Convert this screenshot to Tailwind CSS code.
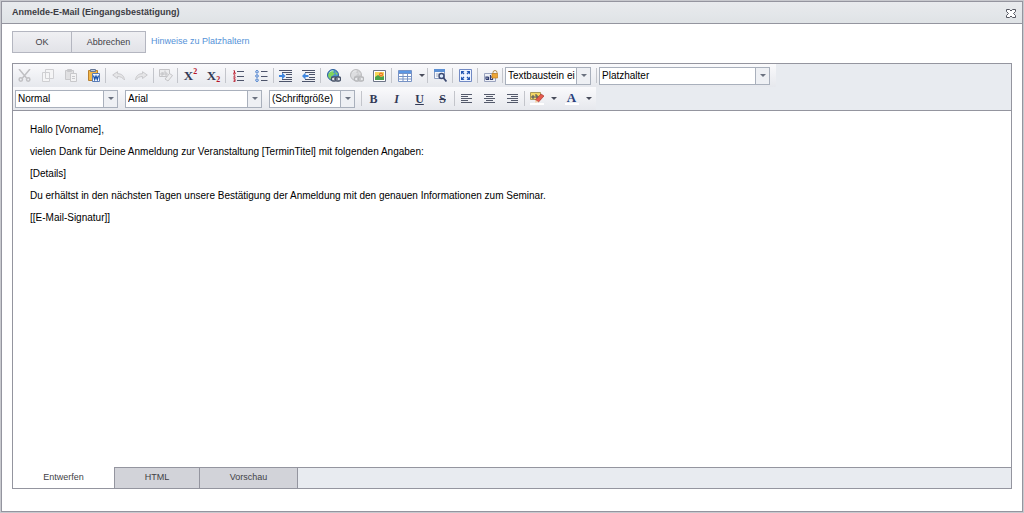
<!DOCTYPE html>
<html lang="de">
<head>
<meta charset="utf-8">
<title>Anmelde-E-Mail (Eingangsbestätigung)</title>
<script src="https://cdn.jsdelivr.net/npm/@tailwindcss/browser@4"></script>
</head>
<body class="h-screen overflow-hidden bg-[#c8c9ce] p-px font-['Liberation_Sans',Arial,sans-serif] text-[9px] text-[#3f3f46]">
<svg class="hidden" aria-hidden="true">
  <defs>
    <g id="globe"><circle cx="6" cy="6" r="5.5" fill="#4b8fd0" stroke="#2c5f9a"/><path d="M1 6c1-3 3-5 6-4.500l-1 2 2 1-2 2-2 1 1 3c-2 0-4-2-4-4.500zM8 2l3 3-2 1z" fill="#7fd35c"/><path d="M2.500 3.500c1-1.500 3-2 4-1.500" fill="none" stroke="#d4eefc" stroke-width=".8"/></g>
    <g id="chain" fill="none" stroke="#465066" stroke-width="1.300"><rect x="4.500" y="8" width="5" height="4" rx="1.500" fill="#e2e5ea"/><rect x="8.500" y="8" width="5" height="4" rx="1.500" fill="#e2e5ea"/><path d="M7 10h4"/></g>
  </defs>
</svg>
<main class="flex h-[calc(100vh-2px)] flex-col border border-[#94959f] bg-white" role="dialog" aria-labelledby="title">
  <header class="flex h-[22px] shrink-0 items-center justify-between border-b border-[#94959f] bg-gradient-to-b from-[#e9ebee] to-[#dfe3e6] pr-[6px] pl-[10px]">
    <h1 id="title" class="leading-none font-bold text-[#3c3c44]">Anmelde-E-Mail (Eingangsbestätigung)</h1>
    <button class="flex pt-px" aria-label="Schließen"><svg width="10" height="9" viewBox="0 0 10 9" fill="#fff" stroke="#555761"><path d="M.5.5h3L5 2 6.500.5h3v2l-2 2 2 2v2h-3L5 7 3.500 8.500h-3v-2l2-2-2-2z"/></svg></button>
  </header>
  <div class="flex shrink-0 items-start px-[10px] pt-[7px] pb-[10px]">
    <button class="h-[22px] w-[60px] border border-[#b4b6c0] bg-gradient-to-b from-[#f0f0f3] to-[#e2e3e8] leading-none">OK</button>
    <button class="-ml-px h-[22px] w-[75px] border border-[#b4b6c0] bg-gradient-to-b from-[#f0f0f3] to-[#e2e3e8] leading-none">Abbrechen</button>
    <a href="#hinweise" class="ml-[5px] pt-1 leading-3 text-[#5592d8]">Hinweise zu Platzhaltern</a>
  </div>
  <section class="mx-[10px] mb-[22px] flex min-h-0 flex-1 flex-col border border-[#94959f]">
    <div class="flex shrink-0 flex-col items-start border-b border-[#94959f] bg-[#e8ebf0]" role="toolbar" aria-label="Formatierung">
      <div class="flex h-[23px] items-center bg-gradient-to-b from-[#fafafc] to-[#e6e8ed] pr-[6px]">
        <button disabled aria-label="Ausschneiden" class="flex w-[23px] justify-center"><svg width="13" height="13" viewBox="0 0 13 13" fill="none" stroke="#c0c0c3" stroke-width="1.500"><path d="M1 0l7.500 9M12 0L4.500 9"/><circle cx="2.800" cy="10.500" r="1.700"/><circle cx="10.200" cy="10.500" r="1.700"/></svg></button>
        <button disabled aria-label="Kopieren" class="flex w-[23px] justify-center"><svg width="12" height="13" viewBox="0 0 12 13" fill="#f5f5f6" stroke="#cfcfd2"><path d="M3.500.5h8v9h-8zM.5 3.500h7v9h-7z"/></svg></button>
        <button disabled aria-label="Einfügen" class="flex w-[23px] justify-center"><svg width="12" height="13" viewBox="0 0 12 13" fill="#e0e0e2" stroke="#c8c8cb"><path d="M.5 1.500h8v9h-8zM2.500.5h4v2h-4z"/><path d="M5.500 4.500h6v8h-6z" fill="#f3f3f4"/><path d="M7 7.500h3M7 9.500h3"/></svg></button>
        <button aria-label="Aus Word einfügen" class="flex w-[23px] justify-center"><svg width="12" height="13" viewBox="0 0 12 13"><path d="M.5 1.500h9v10h-9z" fill="#f2b74a" stroke="#b9802e"/><path d="M2.500.5h5v2h-5z" fill="#b9c6dd" stroke="#667896"/><path d="M4.500 4.500h7v8h-7z" fill="#f7faff" stroke="#5a7cb5"/><path d="M5.500 6.500l1.200 4L8 7l1.300 3.500 1.200-4" fill="none" stroke="#1d55ad" stroke-width="1.300"/></svg></button>
        <span class="mr-px h-[15px] w-px bg-[#c3c5cb]"></span>
        <button disabled aria-label="Rückgängig" class="flex w-[23px] justify-center"><svg width="13" height="10" viewBox="0 0 13 10" fill="#e5e5e7" stroke="#c9c9cc"><path d="M.7 4L5.500.7v2c4 0 6.500 2 7 6.300C10.500 6.500 8.500 5.500 5.500 5.500v2z"/></svg></button>
        <button disabled aria-label="Wiederholen" class="flex w-[23px] justify-center"><svg width="13" height="10" viewBox="0 0 13 10" fill="#e5e5e7" stroke="#c9c9cc"><path d="M12.300 4L7.500.7v2C3.500 2.700 1 4.700.5 9c2-2.500 4-3.500 7-3.500v2z"/></svg></button>
        <span class="h-[15px] w-px bg-[#c3c5cb]"></span>
        <button disabled aria-label="Format entfernen" class="flex w-[23px] justify-center"><svg width="14" height="13" viewBox="0 0 14 13" fill="#ececee" stroke="#c4c4c7"><path d="M.5.5h10v7H.5z"/><path d="M2 5.500V4h2v2H2zM4 6V3M6 1.500V6h2V4H6M10.500 4.500l3 2-4.500 5.500-3-2z"/></svg></button>
        <span class="mr-px h-[15px] w-px bg-[#c3c5cb]"></span>
        <button aria-label="Hochgestellt" class="flex h-[16px] w-[23px] items-center justify-center font-['Liberation_Serif',serif] text-[13px] leading-none font-bold text-[#333a56]">X<sup class="top-0 self-start text-[8px] leading-none text-[#b71528]">2</sup></button>
        <button aria-label="Tiefgestellt" class="flex h-[16px] w-[23px] items-center justify-center font-['Liberation_Serif',serif] text-[13px] leading-none font-bold text-[#333a56]">X<sub class="bottom-0 self-end text-[8px] leading-none text-[#b71528]">2</sub></button>
        <span class="mr-px h-[15px] w-px bg-[#c3c5cb]"></span>
        <button aria-label="Nummerierte Liste" class="flex w-[23px] justify-center"><svg width="12" height="12" viewBox="0 0 12 12" fill="none"><path d="M4 1.500h7M4 6.500h7M4 10.500h7" stroke="#4d546b"/><path d="M.5.700h1V3M0 3.200h3M.5 4.700h1.200v1L.7 7.200h2M.5 8.700h1.500v3H.4M.7 10.200H2" stroke="#bd2435"/></svg></button>
        <button aria-label="Aufzählung" class="flex w-[23px] justify-center"><svg width="13" height="12" viewBox="0 0 13 12" fill="none"><path d="M6 1.500h6.500M6 6.500h6.500M6 10.500h6.500" stroke="#4d546b"/><g fill="#dce9fc" stroke="#4e80cb"><circle cx="2" cy="1.800" r="1.300"/><circle cx="2" cy="6" r="1.300"/><circle cx="2" cy="10.200" r="1.300"/></g></svg></button>
        <span class="h-[15px] w-px bg-[#c3c5cb]"></span>
        <button aria-label="Einzug vergrößern" class="flex w-[23px] justify-center"><svg width="13" height="12" viewBox="0 0 13 12" fill="none" stroke="#4d546b"><path d="M0 .5h13M3 2.500h10M7 4.500h6M7 7.500h6M3 9.500h10M0 11.500h13"/><path d="M0 5h3V2.500L6.500 6 3 9.500V7H0z" fill="#3f86df" stroke="none"/></svg></button>
        <button aria-label="Einzug verkleinern" class="flex w-[23px] justify-center"><svg width="13" height="12" viewBox="0 0 13 12" fill="none" stroke="#4d546b"><path d="M0 .5h13M3 2.500h10M7 4.500h6M7 7.500h6M3 9.500h10M0 11.500h13"/><path d="M6.500 5h-3V2.500L0 6l3.500 3.500V7h3z" fill="#3f86df" stroke="none"/></svg></button>
        <span class="mr-px h-[15px] w-px bg-[#c3c5cb]"></span>
        <button aria-label="Link einfügen" class="flex w-[23px] justify-center"><svg width="14" height="13" viewBox="0 0 14 13"><use href="#globe"/><use href="#chain"/></svg></button>
        <button disabled aria-label="Link entfernen" class="flex w-[23px] justify-center opacity-35 grayscale"><svg width="14" height="13" viewBox="0 0 14 13"><use href="#globe"/><use href="#chain"/></svg></button>
        <button aria-label="Bild einfügen" class="flex w-[23px] justify-center"><svg width="13" height="12" viewBox="0 0 13 12"><path d="M.5.5h12v11H.5z" fill="#fff" stroke="#6d7487"/><path d="M2 2h9v8H2z" fill="#f7d65a"/><path d="M2 7l3-2 3 2 3-1v4H2z" fill="#4ba148"/><circle cx="8" cy="4.500" r="2" fill="#e96e26"/><circle cx="8" cy="4.500" r=".8" fill="#ffe37a"/></svg></button>
        <span class="mr-px h-[15px] w-px bg-[#c3c5cb]"></span>
        <button aria-label="Tabelle einfügen" class="flex w-[23px] justify-center"><svg width="14" height="12" viewBox="0 0 14 12"><path d="M.5.5h13v11H.5z" fill="#fff"/><path d="M.5.5h13v3H.5z" fill="#5b97e5"/><path d="M.5.5h13v11H.5zM0 3.500h14M0 6.500h14M0 9h14M5 3v9M9.500 3v9" fill="none" stroke="#7792c5"/></svg></button>
        <button aria-label="Tabellenmenü" class="flex w-[11px] justify-center"><svg width="6" height="3" viewBox="0 0 6 3"><path d="M0 0h6L3 3z" fill="#484c5b"/></svg></button>
        <span class="mr-px h-[15px] w-px bg-[#c3c5cb]"></span>
        <button aria-label="Suchen und ersetzen" class="flex w-[23px] justify-center"><svg width="13" height="13" viewBox="0 0 13 13"><path d="M.5.500h10v9H.5z" fill="#f5f8fd" stroke="#8b9cbf"/><path d="M0 0h11v3H0z" fill="#5c90d4"/><path d="M2 5h3M2 7h2" stroke="#a5b0c6"/><circle cx="7.500" cy="7" r="2.500" fill="#dcecff" stroke="#3c4a72" stroke-width="1.400"/><path d="M9.500 9l3 3.500" stroke="#3c4a72" stroke-width="1.800"/></svg></button>
        <span class="mr-px h-[15px] w-px bg-[#c3c5cb]"></span>
        <button aria-label="Vollbild" class="flex w-[23px] justify-center"><svg width="13" height="13" viewBox="0 0 13 13"><path d="M.5.500h12v12H.5z" fill="#eef4ff" stroke="#7189c4"/><path d="M2 2h3.500L2 5.500zM11 2v3.500L7.500 2zM2 11V7.500L5.500 11zM11 11H7.500L11 7.500z" fill="#2456b2"/><path d="M3 3l2 2M10 3L8 5M3 10l2-2M10 10L8 8" stroke="#2456b2" stroke-width="1.300"/></svg></button>
        <span class="mr-px h-[15px] w-px bg-[#c3c5cb]"></span>
        <button aria-label="Platzhalter schützen" class="flex w-[23px] justify-center"><svg width="14" height="12" viewBox="0 0 14 12"><path d="M.5 3.500h11v8H.5z" fill="#eef0f7" stroke="#9aa3be"/><path d="M2 9.500V7h2v2.500H2M4.500 7v3M6.500 5v4.500h2V7h-2" fill="none" stroke="#2f3c70" stroke-width="1.200"/><path d="M9 4V2.500a2 2 0 0 1 4 0V4" fill="none" stroke="#b08a50"/><path d="M8 3.500h5.500V8H8z" fill="#eda536" stroke="#bf7e22" stroke-width=".7"/></svg></button>
        <span class="mr-px h-[15px] w-px bg-[#c3c5cb]"></span>
        <div class="relative ml-px h-[18px] w-[86px] border border-[#a9b0bc] bg-white"><select aria-label="Textbaustein einfügen" class="h-full w-[69px] appearance-none overflow-hidden pl-[2px] text-[10px] leading-none text-black"><option>Textbaustein einfügen</option></select><span class="pointer-events-none absolute inset-y-0 right-0 flex w-[14px] items-center justify-center border-l border-[#a9b0bc] bg-[#eef0f4]"><svg width="6" height="3" viewBox="0 0 6 3"><path d="M0 0h6L3 3z" fill="#6b7280"/></svg></span></div>
        <span class="mr-[2px] ml-[5px] h-[15px] w-px bg-[#c3c5cb]"></span>
        <div class="relative h-[18px] w-[171px] border border-[#a9b0bc] bg-white"><select aria-label="Platzhalter" class="h-full w-full appearance-none pl-[2px] text-[10px] leading-none text-black"><option>Platzhalter</option></select><span class="pointer-events-none absolute inset-y-0 right-0 flex w-[14px] items-center justify-center border-l border-[#a9b0bc] bg-[#eef0f4]"><svg width="6" height="3" viewBox="0 0 6 3"><path d="M0 0h6L3 3z" fill="#6b7280"/></svg></span></div>
      </div>
      <div class="flex h-[23px] items-center bg-gradient-to-b from-[#fafafc] to-[#e6e8ed] pr-[2px] pl-[2px]">
        <div class="relative h-[18px] w-[103px] border border-[#a9b0bc] bg-white"><select aria-label="Absatzformat" class="h-full w-full appearance-none pl-[2px] text-[10px] leading-none text-black"><option>Normal</option></select><span class="pointer-events-none absolute inset-y-0 right-0 flex w-[14px] items-center justify-center border-l border-[#a9b0bc] bg-[#eef0f4]"><svg width="6" height="3" viewBox="0 0 6 3"><path d="M0 0h6L3 3z" fill="#6b7280"/></svg></span></div>
        <div class="relative ml-[7px] h-[18px] w-[137px] border border-[#a9b0bc] bg-white"><select aria-label="Schriftart" class="h-full w-full appearance-none pl-[2px] text-[10px] leading-none text-black"><option>Arial</option></select><span class="pointer-events-none absolute inset-y-0 right-0 flex w-[14px] items-center justify-center border-l border-[#a9b0bc] bg-[#eef0f4]"><svg width="6" height="3" viewBox="0 0 6 3"><path d="M0 0h6L3 3z" fill="#6b7280"/></svg></span></div>
        <div class="relative ml-[7px] h-[18px] w-[86px] border border-[#a9b0bc] bg-white"><select aria-label="Schriftgröße" class="h-full w-full appearance-none pl-[2px] text-[10px] leading-none text-black"><option>(Schriftgröße)</option></select><span class="pointer-events-none absolute inset-y-0 right-0 flex w-[14px] items-center justify-center border-l border-[#a9b0bc] bg-[#eef0f4]"><svg width="6" height="3" viewBox="0 0 6 3"><path d="M0 0h6L3 3z" fill="#6b7280"/></svg></span></div>
        <span class="ml-[6px] h-[15px] w-px bg-[#c3c5cb]"></span>
        <button aria-label="Fett" class="w-[23px] font-['Liberation_Serif',serif] text-xs leading-none font-bold text-[#333a56]">B</button>
        <button aria-label="Kursiv" class="w-[23px] font-['Liberation_Serif',serif] text-xs leading-none font-bold text-[#333a56] italic">I</button>
        <button aria-label="Unterstrichen" class="w-[23px] font-['Liberation_Serif',serif] text-xs leading-none font-bold text-[#333a56] underline">U</button>
        <button aria-label="Durchgestrichen" class="w-[23px] font-['Liberation_Serif',serif] text-xs leading-none font-bold text-[#333a56] line-through">S</button>
        <span class="h-[15px] w-px bg-[#c3c5cb]"></span>
        <button aria-label="Linksbündig" class="flex w-[23px] justify-center"><svg width="11" height="9" viewBox="0 0 11 9" stroke="#545a6b"><path d="M0 .5h11M0 2.500h7M0 4.500h11M0 6.500h7M0 8.500h11"/></svg></button>
        <button aria-label="Zentriert" class="flex w-[23px] justify-center"><svg width="11" height="9" viewBox="0 0 11 9" stroke="#545a6b"><path d="M0 .5h11M2 2.500h7M0 4.500h11M2 6.500h7M0 8.500h11"/></svg></button>
        <button aria-label="Rechtsbündig" class="flex w-[23px] justify-center"><svg width="11" height="9" viewBox="0 0 11 9" stroke="#545a6b"><path d="M0 .5h11M4 2.500h7M0 4.500h11M4 6.500h7M0 8.500h11"/></svg></button>
        <span class="h-[15px] w-px bg-[#c3c5cb]"></span>
        <button aria-label="Hintergrundfarbe" class="flex w-[23px] justify-center"><svg width="14" height="13" viewBox="0 0 14 13"><path d="M.5.500h10v7H.5z" fill="#f3d765" stroke="#a8995a"/><path d="M2 6V4h2v2zM6 2v4h2V4H6" fill="none" stroke="#454b60"/><path d="M11 2l3 2-5.500 6-3-2z" fill="#e45a4d" stroke="#aa3a34" stroke-width=".7"/><path d="M5.500 8l3 2-3.300.8z" fill="#f4d2a4"/><path d="M0 11h14v2H0z" fill="#fff"/></svg></button>
        <button aria-label="Hintergrundfarbe wählen" class="flex w-[11px] justify-center"><svg width="6" height="3" viewBox="0 0 6 3"><path d="M0 0h6L3 3z" fill="#484c5b"/></svg></button>
        <button aria-label="Schriftfarbe" class="flex w-[25px] flex-col items-center font-['Liberation_Serif',serif] text-[13px] leading-[11px] font-bold text-[#283f7c]">A<span class="h-[2px] w-[14px] bg-white"></span></button>
        <button aria-label="Schriftfarbe wählen" class="flex w-[10px] justify-center"><svg width="6" height="3" viewBox="0 0 6 3"><path d="M0 0h6L3 3z" fill="#484c5b"/></svg></button>
      </div>
    </div>
    <div contenteditable="true" role="textbox" aria-label="Nachricht" aria-multiline="true" class="flex flex-1 flex-col gap-[8px] px-[17px] pt-[12px] text-[10px] leading-[14px] text-black outline-none">
      <p>Hallo [Vorname],</p>
      <p>vielen Dank für Deine Anmeldung zur Veranstaltung [TerminTitel] mit folgenden Angaben:</p>
      <p>[Details]</p>
      <p>Du erhältst in den nächsten Tagen unsere Bestätigung der Anmeldung mit den genauen Informationen zum Seminar.</p>
      <p>[[E-Mail-Signatur]]</p>
    </div>
    <div class="flex h-[21px] shrink-0" role="tablist">
      <button role="tab" aria-selected="true" class="w-[101px] bg-white">Entwerfen</button>
      <button role="tab" aria-selected="false" class="w-[85px] border-t border-l border-[#94959f] bg-[#d2d3d9]">HTML</button>
      <button role="tab" aria-selected="false" class="w-[99px] border-x border-t border-[#94959f] bg-[#d2d3d9]">Vorschau</button>
      <span class="flex-1 border-t border-[#94959f] bg-[#e8ebf0]"></span>
    </div>
  </section>
</main>
</body>
</html>
